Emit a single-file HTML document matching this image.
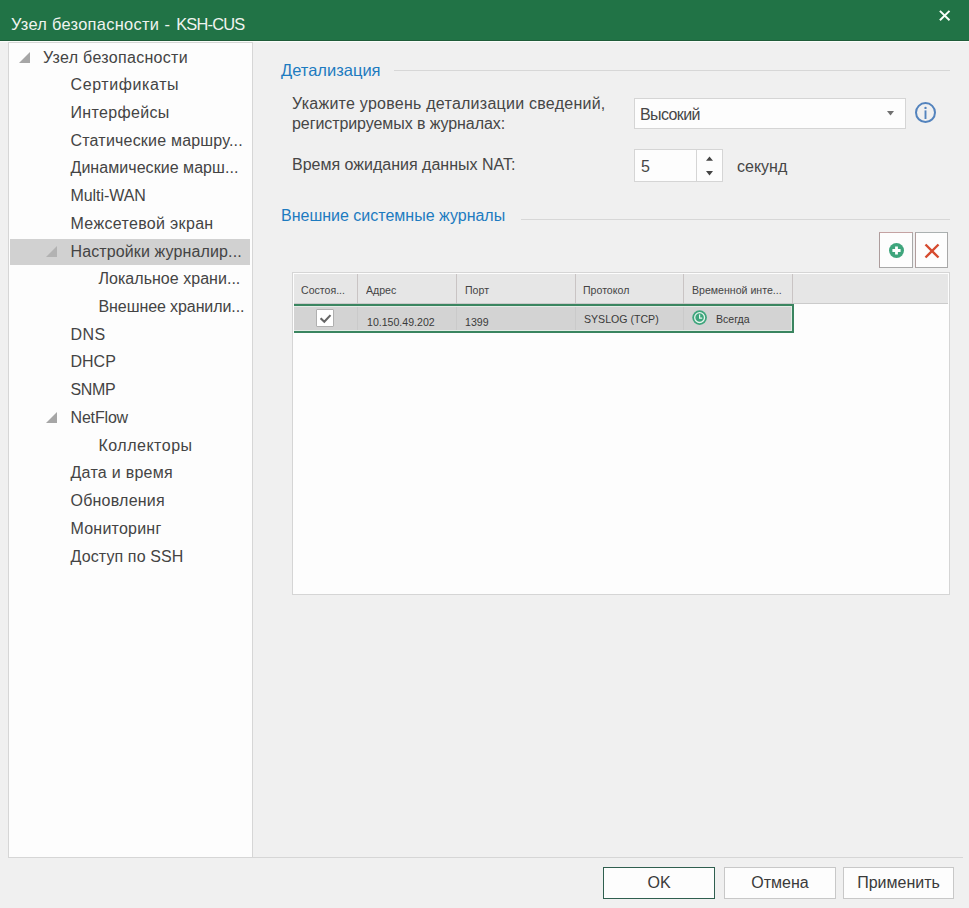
<!DOCTYPE html>
<html><head><meta charset="utf-8">
<style>
*{margin:0;padding:0;box-sizing:border-box}
html,body{width:969px;height:908px;overflow:hidden;background:#f0f0f0;font-family:"Liberation Sans",sans-serif;color:#3a3a3a}
.abs{position:absolute}
#title{left:0;top:0;width:969px;height:41px;background:#217346;border-bottom:1px solid #1f5c3a;color:#f0f4f0;font-size:16.4px}
#title .t{left:11px;top:1px;line-height:46px;white-space:nowrap}
#tree{left:8px;top:42px;width:245px;height:816px;background:#fdfdfd;border:1px solid #d6d6d6}
.row{position:absolute;left:10px;width:240px;height:26px;line-height:26.5px;font-size:16px;white-space:nowrap;color:#444}
.row.sel{background:#d1d1d1}
.tri{position:absolute;width:0;height:0;border-style:solid;border-width:0 0 11px 11px;border-color:transparent transparent #a6a6a6 transparent}
.lbl{position:absolute;font-size:16px;white-space:nowrap;color:#464646}
.hdr{position:absolute;font-size:16px;color:#1d7bc0;white-space:nowrap}
.hline{position:absolute;height:1px;background:#d7d7d7}
.box{position:absolute;background:#fdfdfd;border:1px solid #d5d5d5}
.btn{position:absolute;background:#fdfdfd;border:1px solid #c8c8c8;font-size:16px;text-align:center;line-height:30px;color:#3a3a3a}
.th{position:absolute;top:0;height:30px;font-size:11.5px;line-height:30px;padding-top:1px;white-space:nowrap;color:#444}
.sep{position:absolute;top:0;width:1px;height:30px;background:#c9c4c4}
.td{position:absolute;font-size:11.5px;white-space:nowrap;color:#3a3a3a}
.sx{display:inline-block;transform-origin:0 50%;transform:scaleX(0.92)}
</style></head><body>
<div id="title" class="abs"><div class="t abs"><span style="letter-spacing:0.3px">Узел безопасности</span><span style="letter-spacing:0.8px"> - </span><span style="letter-spacing:-0.78px">KSH-CUS</span></div>
<svg class="abs" style="left:938px;top:9px" width="14" height="14" viewBox="0 0 14 14"><path d="M1.9 1.9L11.5 11.2M11.5 1.9L1.9 11.2" stroke="#fafffa" stroke-width="2"/></svg>
</div>
<div class="abs" style="left:0;top:41px;width:969px;height:1px;background:#fafdfa"></div>

<div id="tree" class="abs"></div>
<div id="treerows" class="abs" style="left:0;top:0">
<div class="row" style="top:44.56px"><div class="tri" style="left:9px;top:7px"></div><span class="abs" style="left:33px;letter-spacing:0.31px">Узел безопасности</span></div>
<div class="row" style="top:72.28px"><span class="abs" style="left:60.5px;letter-spacing:0.6px">Сертификаты</span></div>
<div class="row" style="top:100.0px"><span class="abs" style="left:60.5px;letter-spacing:0.33px">Интерфейсы</span></div>
<div class="row" style="top:127.72px"><span class="abs" style="left:60.5px;letter-spacing:0.2px">Статические маршру...</span></div>
<div class="row" style="top:155.44px"><span class="abs" style="left:60.5px;letter-spacing:0.05px">Динамические марш...</span></div>
<div class="row" style="top:183.16px"><span class="abs" style="left:60.5px;letter-spacing:-0.06px">Multi-WAN</span></div>
<div class="row" style="top:210.88px"><span class="abs" style="left:60.5px;letter-spacing:0.33px">Межсетевой экран</span></div>
<div class="row sel" style="top:238.6px"><div class="tri" style="left:36px;top:7px;border-bottom-color:#b2b2b2"></div><span class="abs" style="left:60.5px;letter-spacing:0.12px">Настройки журналир...</span></div>
<div class="row" style="top:266.32px"><span class="abs" style="left:88.5px;letter-spacing:0.03px">Локальное храни...</span></div>
<div class="row" style="top:294.04px"><span class="abs" style="left:88.5px;letter-spacing:-0.09px">Внешнее хранили...</span></div>
<div class="row" style="top:321.76px"><span class="abs" style="left:60.5px;letter-spacing:0.5px">DNS</span></div>
<div class="row" style="top:349.48px"><span class="abs" style="left:60.5px;letter-spacing:0px">DHCP</span></div>
<div class="row" style="top:377.2px"><span class="abs" style="left:60.5px;letter-spacing:-0.33px">SNMP</span></div>
<div class="row" style="top:404.92px"><div class="tri" style="left:36px;top:7px"></div><span class="abs" style="left:60.5px;letter-spacing:-0.17px">NetFlow</span></div>
<div class="row" style="top:432.64px"><span class="abs" style="left:88.5px;letter-spacing:0.5px">Коллекторы</span></div>
<div class="row" style="top:460.36px"><span class="abs" style="left:60.5px;letter-spacing:0.27px">Дата и время</span></div>
<div class="row" style="top:488.08px"><span class="abs" style="left:60.5px;letter-spacing:0.22px">Обновления</span></div>
<div class="row" style="top:515.8px"><span class="abs" style="left:60.5px;letter-spacing:0.22px">Мониторинг</span></div>
<div class="row" style="top:543.52px"><span class="abs" style="left:60.5px;letter-spacing:0.12px">Доступ по SSH</span></div>
</div>

<!-- Детализация -->
<div class="hdr" style="left:281px;top:61px;font-size:16.5px">Детализация</div>
<div class="hline" style="left:394px;top:70px;width:556px"></div>
<div class="lbl" style="left:292px;top:94px;line-height:19.6px;letter-spacing:0.25px">Укажите уровень детализации сведений,</div>
<div class="lbl" style="left:292px;top:113.6px;line-height:19.6px;letter-spacing:-0.08px">регистрируемых в журналах:</div>
<div class="box" style="left:634px;top:98px;width:272px;height:31px"></div>
<div class="lbl" style="left:640px;top:106px;font-size:16px;letter-spacing:-0.62px">Высокий</div>
<svg class="abs" style="left:887px;top:110.5px" width="7" height="5" viewBox="0 0 7 5"><path d="M0 0H7L3.5 4.5Z" fill="#707070"/></svg>
<svg class="abs" style="left:914px;top:101px" width="24" height="24" viewBox="0 0 24 24"><circle cx="11.5" cy="11.6" r="9.5" fill="none" stroke="#5383bd" stroke-width="2"/><rect x="10.55" y="9.4" width="1.9" height="8.6" fill="#5383bd"/><circle cx="11.5" cy="6.9" r="1.2" fill="#5383bd"/></svg>

<div class="lbl" style="left:292px;top:156px">Время ожидания данных NAT:</div>
<div class="box" style="left:634px;top:149px;width:63px;height:33px"></div>
<div class="box" style="left:696px;top:149px;width:27px;height:33px"></div>
<div class="lbl" style="left:641px;top:158px">5</div>
<svg class="abs" style="left:706px;top:156px" width="8" height="20" viewBox="0 0 8 20"><path d="M0 4.8L3.5 0.6L7 4.8Z M0 15L3.5 19.4L7 15Z" fill="#454545"/></svg>
<div class="lbl" style="left:737px;top:158px">секунд</div>

<!-- Внешние -->
<div class="hdr" style="left:281px;top:207px">Внешние системные журналы</div>
<div class="hline" style="left:521px;top:219px;width:429px"></div>

<div class="btn" style="left:879px;top:232px;width:34px;height:36px;border-color:#c4a2a2 #a8a8a8 #a8a8a8 #ad9c9c"></div>
<svg class="abs" style="left:888px;top:242px" width="17" height="17" viewBox="0 0 17 17"><circle cx="8.5" cy="8.5" r="7.5" fill="#3ea57c"/><path d="M8.5 4.4V12.6M4.4 8.5H12.6" stroke="#fff" stroke-width="2.8"/></svg>
<div class="btn" style="left:915px;top:232px;width:33px;height:36px;border-color:#aab0b0 #a8a8a8 #a8a8a8 #b09c9c"></div>
<svg class="abs" style="left:924px;top:243px" width="16" height="16" viewBox="0 0 16 16"><path d="M1.5 1.5L14.5 14.5M14.5 1.5L1.5 14.5" stroke="#d64a2e" stroke-width="2.4"/></svg>

<!-- table -->
<div class="box" style="left:292px;top:272px;width:658px;height:323px"></div>
<div class="abs" style="left:294px;top:274px;width:654px;height:30px;background:#e6e6e6;border-bottom:1px solid #cbcbcb">
  <div class="th" style="left:7px"><span class="sx">Состоя...</span></div>
  <div class="sep" style="left:63px"></div>
  <div class="th" style="left:72px"><span class="sx">Адрес</span></div>
  <div class="sep" style="left:162px"></div>
  <div class="th" style="left:171px"><span class="sx">Порт</span></div>
  <div class="sep" style="left:281px"></div>
  <div class="th" style="left:289px"><span class="sx">Протокол</span></div>
  <div class="sep" style="left:389px"></div>
  <div class="th" style="left:398px"><span class="sx">Временной инте...</span></div>
  <div class="sep" style="left:498px"></div>
</div>
<div class="abs" style="left:294px;top:304px;width:500px;height:29px;background:#d3d3d3;border:2px solid #3a8560;border-left:none;box-shadow:inset 0 1px 0 #e4ece6,inset 0 -1px 0 #e4ece6,inset -1px 0 0 #e4ece6"></div>
<div class="abs" style="left:357px;top:307px;width:1px;height:23px;background:#cacaca"></div>
<div class="abs" style="left:456px;top:307px;width:1px;height:23px;background:#cacaca"></div>
<div class="abs" style="left:575px;top:307px;width:1px;height:23px;background:#cacaca"></div>
<div class="abs" style="left:683px;top:307px;width:1px;height:23px;background:#cacaca"></div>
<div class="abs" style="left:316px;top:309px;width:18px;height:18px;background:#fff;border:1px solid #b0b0b0;border-radius:1px"></div>
<svg class="abs" style="left:318px;top:311px" width="15" height="15" viewBox="0 0 15 15"><path d="M2.6 7.2L6.3 10.8L12.5 4.1" fill="none" stroke="#666" stroke-width="2.1"/></svg>
<div class="td" style="left:367px;top:316px"><span class="sx">10.150.49.202</span></div>
<div class="td" style="left:465px;top:316px"><span class="sx">1399</span></div>
<div class="td" style="left:584px;top:313px"><span class="sx">SYSLOG (TCP)</span></div>
<svg class="abs" style="left:692px;top:310px" width="16" height="16" viewBox="0 0 16 16"><circle cx="7.6" cy="7.6" r="7.3" fill="#3ea57c"/><circle cx="7.6" cy="7.6" r="4.9" fill="none" stroke="#eaf6ef" stroke-width="1.3"/><path d="M7.6 4.6V8.2H10.2" fill="none" stroke="#eaf6ef" stroke-width="1.2"/></svg>
<div class="td" style="left:716px;top:313px"><span class="sx">Всегда</span></div>

<!-- bottom -->
<div class="abs" style="left:8px;top:857px;width:955px;height:1px;background:#d6d6d6"></div>
<div class="btn" style="left:603px;top:867px;width:112px;height:32px;border-color:#2f5f4f">OK</div>
<div class="btn" style="left:724px;top:867px;width:112px;height:32px">Отмена</div>
<div class="btn" style="left:843px;top:867px;width:111px;height:32px">Применить</div>

</body></html>
